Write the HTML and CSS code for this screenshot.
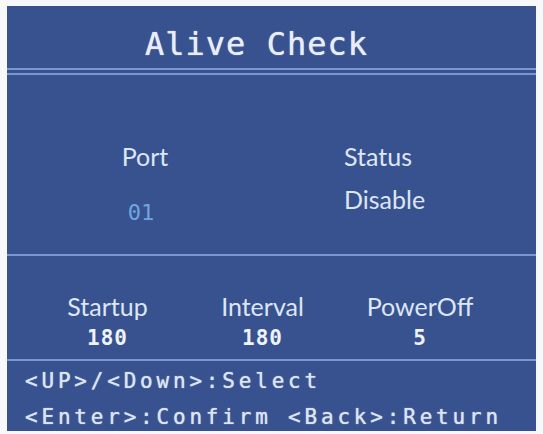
FILE: index.html
```html
<!DOCTYPE html>
<html lang="en">
<head>
    <meta charset="UTF-8">
    <meta name="viewport" content="width=device-width, initial-scale=1.0">
    <title>Alive Check</title>
    <link rel="stylesheet" href="styles.css">
</head>
<body>
    <div class="screen">
        <h1 class="title">Alive Check</h1>
        <div class="double-line"></div>

        <div class="top-row">
            <div class="port-col">
                <div class="label">Port</div>
                <div class="port-value">01</div>
            </div>
            <div class="status-col">
                <div class="label">Status</div>
                <div class="label status-value">Disable</div>
            </div>
        </div>

        <div class="settings">
            <div class="setting">
                <div class="label">Startup</div>
                <div class="value">180</div>
            </div>
            <div class="setting">
                <div class="label">Interval</div>
                <div class="value">180</div>
            </div>
            <div class="setting">
                <div class="label">PowerOff</div>
                <div class="value">5</div>
            </div>
        </div>

        <div class="help">
            <div>&lt;UP&gt;/&lt;Down&gt;:Select</div>
            <div>&lt;Enter&gt;:Confirm &lt;Back&gt;:Return</div>
        </div>
    </div>
</body>
</html>
```

FILE: styles.css
```css
body {
    margin: 0;
    padding: 6px 7px;
    background-color: #f7f8fa;
}
.screen {
    width: 529px;
    height: 425px;
    overflow: hidden;
    background-color: #38528f;
    color: #dde6f4;
}
.title {
    margin: 0;
    height: 62px;
    padding: 23px 30px 0 0;
    box-sizing: border-box;
    font-family: "DejaVu Sans Mono", monospace;
    font-weight: normal;
    font-size: 32px;
    line-height: 31px;
    letter-spacing: 1px;
    text-align: center;
    color: #e8eef9;
    text-shadow: 0 0 1px #e8eef9;
}
.double-line {
    height: 3px;
    border-top: 2px solid #7c96cf;
    border-bottom: 2px solid #7c96cf;
}
.label {
    font-family: Lato, "Open Sans", sans-serif;
    font-size: 25px;
    line-height: 25px;
}
.top-row {
    display: flex;
    height: 181px;
    padding: 69px 0 0 38px;
    box-sizing: border-box;
    border-bottom: 2px solid #7c96cf;
}
.port-col {
    width: 200px;
    text-align: center;
}
.port-value {
    margin-top: 33px;
    padding-right: 8px;
    font-family: "DejaVu Sans Mono", monospace;
    font-size: 22px;
    line-height: 22px;
    color: #6fa6de;
}
.status-col {
    margin-left: 99px;
}
.status-value {
    margin-top: 18px;
}
.settings {
    display: grid;
    grid-template-columns: 155px 155px 160px;
    height: 105px;
    padding: 38px 0 0 23px;
    box-sizing: border-box;
    border-bottom: 2px solid #7c96cf;
    text-align: center;
}
.value {
    margin-top: 9px;
    font-family: "DejaVu Sans Mono", monospace;
    font-weight: bold;
    font-size: 21px;
    line-height: 21px;
    letter-spacing: 1px;
    color: #eef2fa;
}
.help {
    padding: 2px 0 0 18px;
    font-family: "DejaVu Sans Mono", monospace;
    font-size: 21px;
    line-height: 36px;
    letter-spacing: 3.8px;
    color: #dbe4f2;
    text-shadow: 0 0 1px #dbe4f2;
    white-space: nowrap;
}
```
